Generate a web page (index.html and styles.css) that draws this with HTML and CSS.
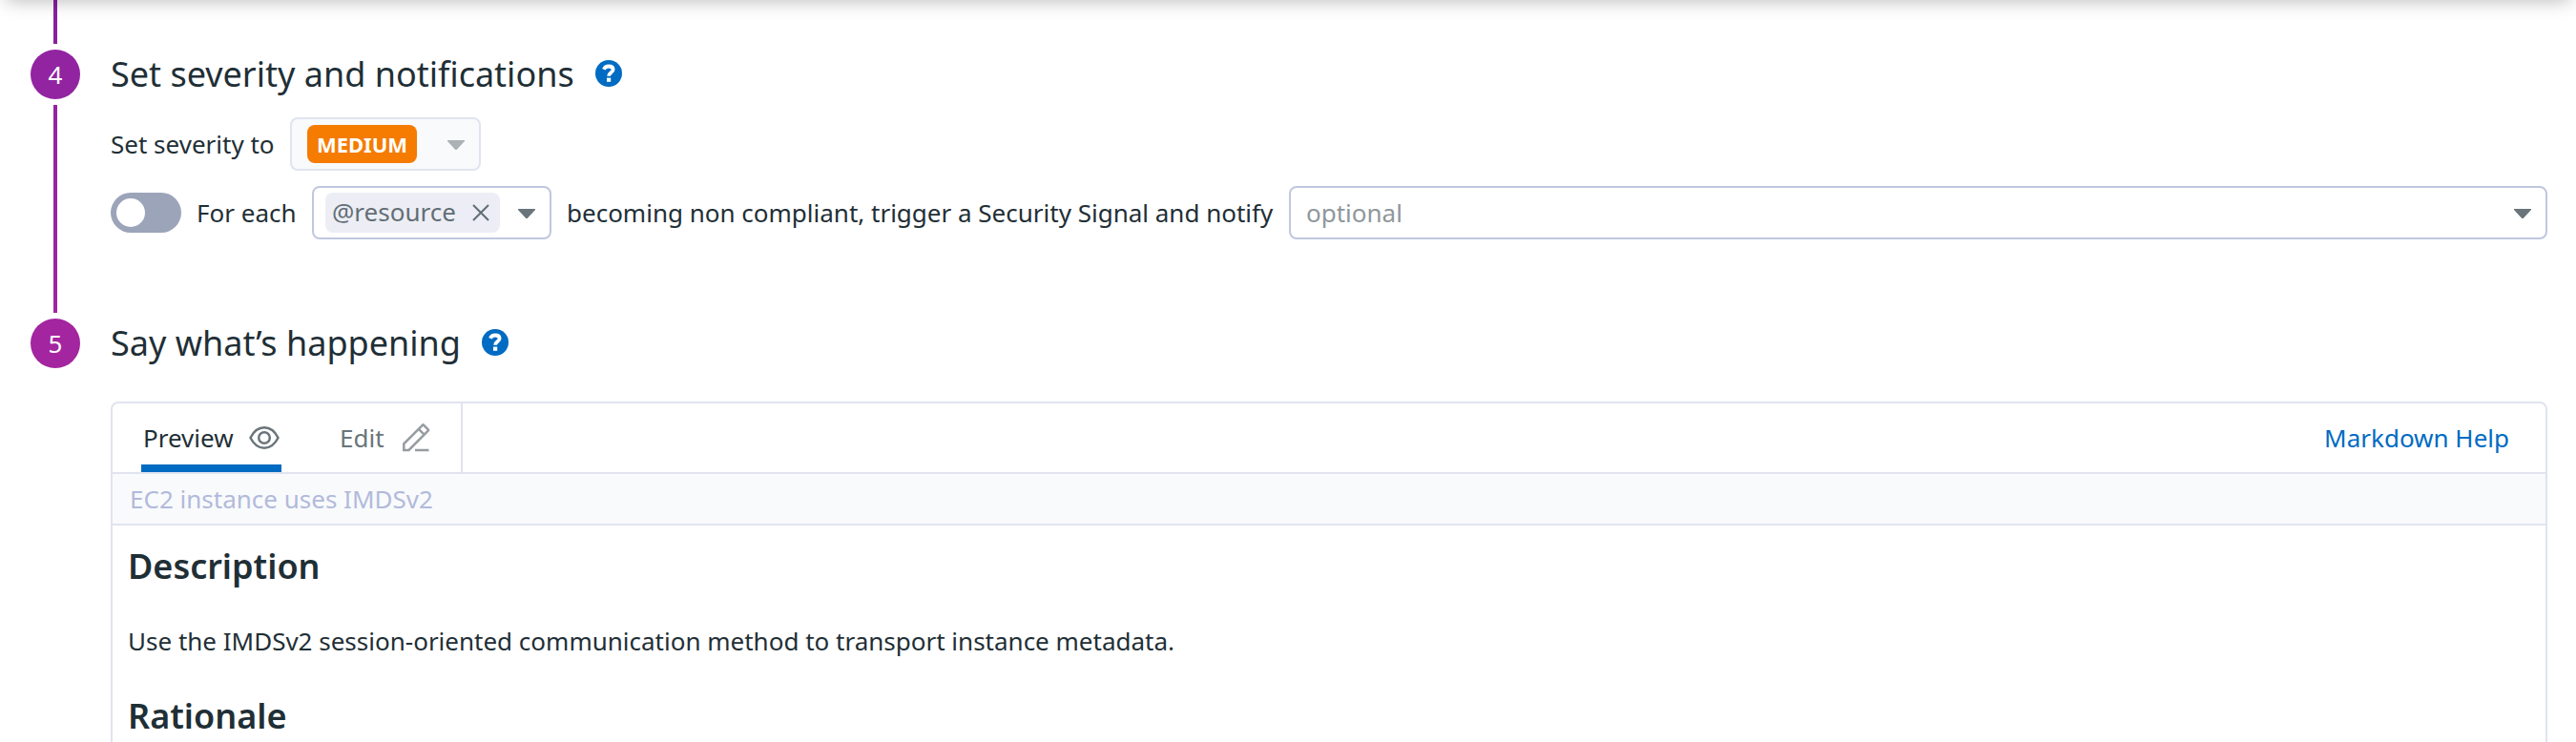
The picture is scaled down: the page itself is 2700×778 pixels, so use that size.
FILE: index.html
```html
<!DOCTYPE html>
<html lang="en">
<head>
<meta charset="utf-8">
<title>Rule editor</title>
<link rel="stylesheet" href="styles.css">
</head>
<body>
<div class="top-shadow"></div>
<main class="steps">
  <section class="step step-severity">
    <div class="rail">
      <div class="line line-in"></div>
      <div class="number number-4">4</div>
      <div class="line line-out"></div>
    </div>
    <div class="content">
      <h2 class="title"><span>Set severity and notifications</span>
        <svg class="help" viewBox="0 0 28 28"><circle cx="14" cy="14" r="14" fill="#006bc2"/><path d="M8.900 9.800C9.900 7.500 11.500 6.500 13.900 6.500c2.900 0 4.700 1.400 4.700 3.500 0 3.100-4.500 3-4.500 6.800" fill="none" stroke="#fff" stroke-width="3.800"/><rect x="12" y="18.600" width="4.200" height="4.200" fill="#fff"/></svg>
      </h2>
      <div class="row severity-row">
        <span class="label severity-label">Set severity to</span>
        <div class="select select-disabled"><span class="badge">MEDIUM</span><svg class="caret" viewBox="0 0 18 10"><path d="M0 0H18V1L9.700 10H8.300L0 1Z"/></svg></div>
      </div>
      <div class="row notify-row">
        <div class="toggle"><div class="knob"></div></div>
        <span class="label each">For each</span>
        <div class="select select-resource"><span class="chip"><span class="chip-text">@resource</span><svg class="close" viewBox="0 0 18 18"><path d="M1 1L17 17M17 1L1 17"/></svg></span><svg class="caret" viewBox="0 0 18 10"><path d="M0 0H18V1L9.700 10H8.300L0 1Z"/></svg></div>
        <span class="label becoming">becoming non compliant, trigger a Security Signal and notify</span>
        <div class="select select-notify"><span class="placeholder">optional</span><svg class="caret" viewBox="0 0 18 10"><path d="M0 0H18V1L9.700 10H8.300L0 1Z"/></svg></div>
      </div>
    </div>
  </section>
  <section class="step step-message">
    <div class="rail"><div class="number number-5">5</div></div>
    <div class="content">
      <h2 class="title"><span>Say what’s happening</span>
        <svg class="help" viewBox="0 0 28 28"><circle cx="14" cy="14" r="14" fill="#006bc2"/><path d="M8.900 9.800C9.900 7.500 11.500 6.500 13.900 6.500c2.900 0 4.700 1.400 4.700 3.500 0 3.100-4.500 3-4.500 6.800" fill="none" stroke="#fff" stroke-width="3.800"/><rect x="12" y="18.600" width="4.200" height="4.200" fill="#fff"/></svg>
      </h2>
      <div class="editor">
        <div class="toolbar">
          <div class="tabs">
            <div class="tab tab-active"><span>Preview</span><svg class="eye" viewBox="0 0 32 24"><path d="M1.500 12C5 5 10 1.300 16 1.300S27 5 30.500 12C27 19 22 22.700 16 22.700S5 19 1.500 12Z"/><circle cx="16" cy="12" r="5.800"/></svg></div>
            <div class="tab tab-edit"><span>Edit</span><svg class="pencil" viewBox="0 0 30 30"><path d="M2.300 28V21.300L21.800 1.800Q22.500 1.100 23.200 1.800L27.700 6.300Q28.400 7 27.700 7.700L7.500 28ZM17.800 5.800L23.800 11.800M14 28H28.500"/></svg></div>
          </div>
          <a class="help-link">Markdown Help</a>
        </div>
        <div class="name-row">EC2 instance uses IMDSv2</div>
        <article class="preview">
          <h3>Description</h3>
          <p>Use the IMDSv2 session-oriented communication method to transport instance metadata.</p>
          <h3>Rationale</h3>
        </article>
      </div>
    </div>
  </section>
</main>
</body>
</html>
```
FILE: styles.css
```css
* { box-sizing: border-box; }
body {
  margin: 0;
  height: 778px;
  overflow: hidden;
  background: #fff;
  color: #1f2f36;
  font: 26px/36px "Noto Sans", sans-serif;
}
svg { display: block; flex: none; }
h2, h3, p { margin: 0; }
.top-shadow {
  position: absolute;
  top: -20px;
  left: 6px;
  right: 6px;
  height: 20px;
  box-shadow: 0 0 20px rgba(0, 0, 0, .3);
}
.step { display: flex; padding-right: 30px; }
.step-severity { height: 328px; }
.step-message { padding-top: 6px; height: 450px; }
.rail {
  width: 116px;
  padding-left: 32px;
  flex: none;
  display: flex;
  flex-direction: column;
}
.line { width: 4px; margin-left: 24px; }
.line-in { height: 46px; background: #87219f; }
.line-out { flex: 1; background: linear-gradient(#9224a1, #a0259f); }
.number {
  width: 52px;
  height: 52px;
  border-radius: 50%;
  color: #fff;
  display: flex;
  align-items: center;
  justify-content: center;
}
.number-4 { background: #9224a1; margin: 6px 0; }
.number-5 { background: #a3259f; }
.content { flex: 1; min-width: 0; }
.title {
  display: flex;
  align-items: center;
  gap: 22px;
  height: 50px;
  font-size: 36px;
  line-height: 50px;
  font-weight: 400;
}
.step-severity .title { margin-top: 53px; }
.step-message .title { margin-top: 1px; }
.help { width: 28px; height: 28px; margin-top: -2px; }
.row { display: flex; align-items: center; height: 56px; }
.label { white-space: nowrap; }
.severity-row { margin-top: 20px; }
.severity-label { width: 188px; }
.notify-row { margin-top: 16px; }
.select {
  height: 56px;
  border: 2px solid #c0c7df;
  border-radius: 8px;
  display: flex;
  align-items: center;
  justify-content: space-between;
  padding-right: 15px;
}
.caret { width: 18px; height: 10px; fill: #69757b; margin-top: 2px; }
.select-disabled {
  width: 200px;
  padding-left: 16px;
  background: #f9fafc;
  border-color: #e1e4ef;
}
.select-disabled .caret { fill: #abb1b4; }
.badge {
  width: 115px;
  height: 40px;
  border-radius: 8px;
  background: #f57c00;
  color: #fff;
  font-size: 22px;
  line-height: 40px;
  font-weight: 700;
  text-align: center;
}
.toggle {
  width: 74px;
  height: 42px;
  padding: 6px;
  border-radius: 21px;
  background: #9ca4ba;
}
.knob { width: 30px; height: 30px; border-radius: 50%; background: #fff; }
.each { width: 121px; margin-left: 16px; }
.select-resource { width: 251px; padding-left: 12px; }
.chip {
  width: 183px;
  height: 42px;
  border-radius: 8px;
  background: #edeef5;
  color: #626e75;
  display: flex;
  align-items: center;
  justify-content: space-between;
  padding: 0 11px 0 7px;
}
.chip-text { padding-bottom: 2px; }
.close { width: 18px; height: 18px; fill: none; stroke: #626e75; stroke-width: 2; }
.becoming { width: 757px; margin-left: 16px; }
.select-notify { flex: 1; padding-left: 16px; }
.placeholder { color: #8f979b; }
.editor {
  margin-top: 36px;
  height: 370px;
  border: 2px solid #e1e4ef;
  border-bottom: 0;
  border-radius: 8px 8px 0 0;
}
.toolbar {
  height: 74px;
  border-bottom: 2px solid #e1e4ef;
  display: flex;
  justify-content: space-between;
  align-items: center;
  padding-right: 38px;
}
.tabs {
  width: 367px;
  height: 72px;
  border-right: 2px solid #e1e4ef;
  padding-left: 30px;
  display: flex;
  gap: 61px;
}
.tab { display: flex; align-items: center; height: 72px; }
.tab-active {
  width: 147px;
  padding-left: 2px;
  border-bottom: 8px solid #006bc2;
  padding-top: 8px;
  gap: 16px;
}
.tab-edit { gap: 18px; color: #69757b; }
.eye { width: 32px; height: 24px; fill: none; stroke: #69757b; stroke-width: 2.500; }
.pencil { width: 30px; height: 30px; fill: none; stroke: #959da1; stroke-width: 2.500; }
.help-link { color: #006bc2; }
.name-row {
  height: 54px;
  padding-left: 18px;
  line-height: 52px;
  background: #f9fafc;
  border-bottom: 2px solid #e1e4ef;
  color: #b2badb;
}
.preview { padding: 18px 16px 0; }
.preview h3 { font-size: 36px; line-height: 50px; font-weight: 600; }
.preview p { margin: 35px 0 36px; }
```
